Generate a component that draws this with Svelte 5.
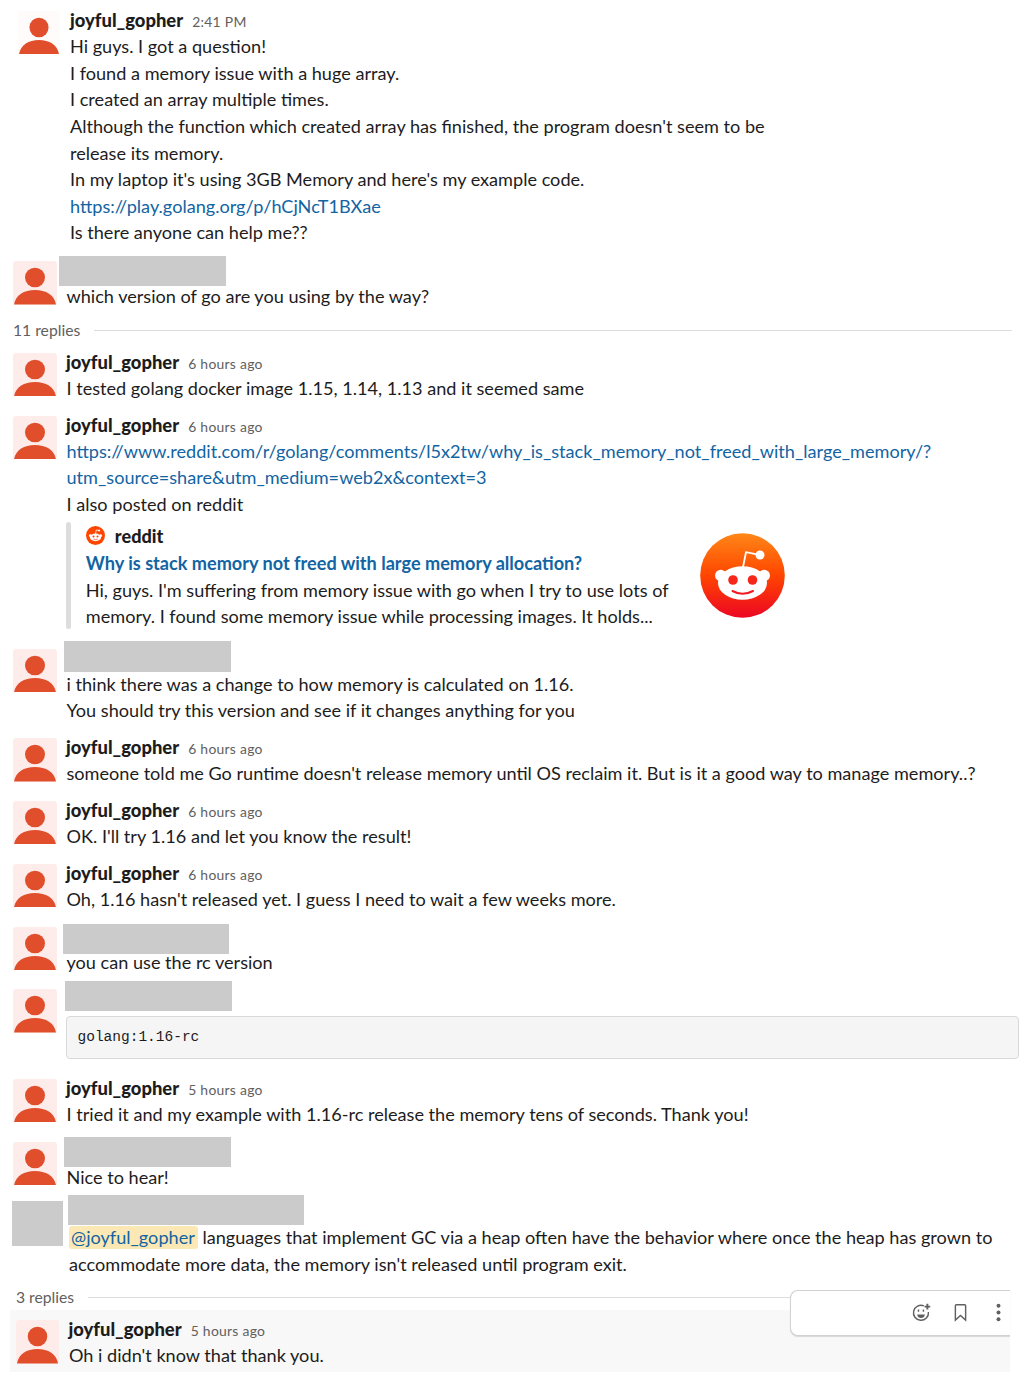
<script>
  const me = 'joyful_gopher';
  const first = [
    'Hi guys. I got a question!',
    'I found a memory issue with a huge array.',
    'I created an array multiple times.',
    "Although the function which created array has finished, the program doesn't seem to be",
    'release its memory.',
    "In my laptop it's using 3GB Memory and here's my example code.",
    { url: 'https://play.golang.org/p/hCjNcT1BXae' },
    'Is there anyone can help me??'
  ];
  const before = [
    { kind: 'first', name: me, time: '2:41 PM', lines: first },
    { kind: 'second', box: [-7.5, -1, 167, 30], lines: ['which version of go are you using by the way?'] }
  ];
  const thread = [
    { name: me, time: '6 hours ago', lines: ['I tested golang docker image 1.15, 1.14, 1.13 and it seemed same'] },
    {
      kind: 'shared',
      name: me,
      time: '6 hours ago',
      lines: [
        { url: 'https://www.reddit.com/r/golang/comments/l5x2tw/why_is_stack_memory_not_freed_with_large_memory/?' },
        { url: 'utm_source=share&utm_medium=web2x&context=3' },
        'I also posted on reddit'
      ],
      card: true
    },
    {
      kind: 'pair',
      box: [-2.5, -4, 167, 31],
      lines: ['i think there was a change to how memory is calculated on 1.16.', 'You should try this version and see if it changes anything for you']
    },
    { name: me, time: '6 hours ago', lines: ["someone told me Go runtime doesn't release memory until OS reclaim it. But is it a good way to manage memory..?"] },
    { name: me, time: '6 hours ago', lines: ["OK. I'll try 1.16 and let you know the result!"] },
    { name: me, time: '6 hours ago', lines: ["Oh, 1.16 hasn't released yet. I guess I need to wait a few weeks more."] },
    { box: [-3.5, 1, 166, 30], lines: ['you can use the rc version'] },
    { kind: 'coded', box: [-1.5, -4.3, 167, 30], lines: [], code: 'golang:1.16-rc' },
    { name: me, time: '5 hours ago', lines: ['I tried it and my example with 1.16-rc release the memory tens of seconds. Thank you!'] },
    { box: [-2.5, -1, 167, 30], lines: ['Nice to hear!'] },
    {
      kind: 'mention',
      box: [-1, -3, 236, 30],
      hidden: true,
      lines: [
        { mention: '@joyful_gopher', rest: ' languages that implement GC via a heap often have the behavior where once the heap has grown to' },
        "accommodate more data, the memory isn't released until program exit."
      ]
    }
  ];
  const last = { kind: 'hovered', name: me, time: '5 hours ago', lines: ["Oh i didn't know that thank you."] };
</script>

{#snippet avatar()}
  <svg class="avatar" viewBox="0 0 44 43.5" preserveAspectRatio="none">
    <rect class="tile" width="44" height="43.5" rx="3" />
    <ellipse cx="22" cy="16.5" rx="10" ry="9.8" />
    <path d="M1 43.5C2.500 34 11 29 22 29S41.500 34 43 43.500Z" />
  </svg>
{/snippet}

{#snippet message(m)}
  <article class="message {m.kind ?? ''}">
    {#if m.hidden}<div class="blank"></div>{:else}{@render avatar()}{/if}
    <div class="body">
      <header>
        {#if m.name}
          <b>{m.name}</b><time>{m.time}</time>
        {:else}
          <div class="redacted" style="margin-left:{m.box[0]}px;margin-top:{m.box[1]}px;width:{m.box[2]}px;height:{m.box[3]}px"></div>
        {/if}
      </header>
      {#each m.lines as l}
        {#if l.url}
          <p><a href="#shared">{l.url}</a></p>
        {:else if l.mention}
          <p><span class="tag">{l.mention}</span>{l.rest}</p>
        {:else}
          <p>{l}</p>
        {/if}
      {/each}
      {#if m.code}<pre>{m.code}</pre>{/if}
      {#if m.card}
        <div class="card">
          <div class="bar"></div>
          <div class="summary">
            <div class="source">
              <svg viewBox="0 0 20 20">
                <circle cx="10" cy="10" r="10" fill="#ff4500" />
                <g fill="#fff">
                  <ellipse cx="10" cy="12" rx="5.800" ry="4" />
                  <circle cx="4.600" cy="10.200" r="1.500" />
                  <circle cx="15.400" cy="10.200" r="1.500" />
                  <circle cx="13.800" cy="4.800" r="1.100" />
                </g>
                <path d="M10 8.500L10.800 4.200L13.500 4.800" fill="none" stroke="#fff" stroke-width=".8" />
                <g fill="#ff4500">
                  <circle cx="7.900" cy="11" r="1.100" />
                  <circle cx="12.100" cy="11" r="1.100" />
                </g>
                <path d="M7.800 13.700Q10 15 12.200 13.700" fill="none" stroke="#ff4500" stroke-width=".7" />
              </svg>
              <strong>reddit</strong>
            </div>
            <p class="title">Why is stack memory not freed with large memory allocation?</p>
            <p>Hi, guys. I'm suffering from memory issue with go when I try to use lots of</p>
            <p>memory. I found some memory issue while processing images. It holds...</p>
          </div>
          <svg class="logo" viewBox="0 0 85 85">
            <defs>
              <linearGradient id="flame" x1="0" y1="0" x2="0" y2="1">
                <stop offset="0" stop-color="#ff8717" />
                <stop offset=".5" stop-color="#ff4500" />
                <stop offset="1" stop-color="#ec0623" />
              </linearGradient>
            </defs>
            <circle cx="42.500" cy="42.500" r="42.300" fill="url(#flame)" />
            <g fill="#fff">
              <ellipse cx="42.500" cy="50" rx="24.500" ry="16.700" />
              <circle cx="20.800" cy="42.500" r="5.800" />
              <circle cx="64.200" cy="42.500" r="5.800" />
              <circle cx="60" cy="22" r="4.500" />
            </g>
            <path d="M43 34L46 19.200L58 21.700" fill="none" stroke="#fff" stroke-width="1.800" stroke-linejoin="round" />
            <g fill="#f5271a">
              <circle cx="33" cy="47" r="4.800" />
              <circle cx="52.500" cy="47" r="4.800" />
            </g>
            <path d="M32.500 58Q42.500 63.500 53 58" fill="none" stroke="#f01a20" stroke-width="2" stroke-linecap="round" />
          </svg>
        </div>
      {/if}
    </div>
  </article>
{/snippet}

<main>
  {#each before as m}{@render message(m)}{/each}
  <div class="divider"><span>11 replies</span><hr /></div>
  {#each thread as m}{@render message(m)}{/each}
  <div class="divider nested"><span>3 replies</span><hr /></div>
  <section>
    {@render message(last)}
    <div class="toolbar">
      <svg viewBox="0 0 20 20">
        <path d="M12.500 3A7.900 7.900 0 1 0 17.300 9.500" />
        <path d="M16.200 .8V6.800M13.200 3.800H19.200" class="plus" />
        <path d="M6.800 6.800V9.300M12 6.800V9.300" />
        <path d="M5.500 12H13.500C13.500 17 5.500 17 5.500 12Z" class="solid" />
      </svg>
      <svg viewBox="0 0 20 20">
        <path d="M4.600 2.800Q4.600 1.800 5.600 1.800H14.400Q15.400 1.800 15.400 2.800V18L10 13.200L4.600 18Z" />
      </svg>
      <svg viewBox="0 0 20 20">
        <g class="solid"><circle cx="10" cy="2.900" r="2.100" /><circle cx="10" cy="10" r="2.100" /><circle cx="10" cy="17.100" r="2.100" /></g>
      </svg>
    </div>
  </section>
</main>

<style>
  :global(body) { background: #fff; }
  main {
    box-sizing: border-box;
    height: 1389px;
    padding-top: 2.4px;
    overflow: hidden;
    font: 18.130px/26.590px Lato, sans-serif;
    color: #1d1c1d;
  }
  .message {
    box-sizing: border-box;
    display: flex;
    height: 62.860px;
    padding: 4.800px 5px 0 13px;
  }
  .avatar { flex: none; width: 44px; height: 43.500px; margin: 4px 9.500px 0 0; fill: #e04e2b; }
  .tile { fill: #fdecea; }
  .body { flex: 1; min-width: 0; }
  header { display: flow-root; height: 26px; white-space: nowrap; }
  header b { margin-left: -.5px; font-size: 18.400px; font-weight: 900; }
  time { margin-left: 9px; font-size: 13.900px; letter-spacing: .28px; color: #616061; }
  .redacted, .blank { background: #cbcbcb; }
  p { margin: 0; white-space: pre; }
  a { color: #1264a3; text-decoration: none; }
  .first { height: 250px; padding-left: 18px; }
  .first .avatar { width: 42px; margin-top: 3.500px; margin-right: 10.300px; margin-left: -.3px; }
  .first .tile { fill: #fefbfa; }
  .first header b { margin-left: 0; }
  .second { height: 63.200px; }
  .divider { display: flex; align-items: center; gap: 14px; height: 28.600px; padding: 0 12px 0 13px; font-size: 15.700px; color: #616061; }
  .divider hr { flex: 1; height: 1px; margin: 1px 0 0; border: 0; background: #ddd; }
  .shared { height: 232.800px; }
  .pair { height: 89.400px; }
  .coded { height: 89.400px; }
  .mention { height: 87.800px; padding: 2px 5px 0 12px; }
  .mention header { height: 26.400px; }
  .blank { flex: none; width: 51px; height: 45px; margin: 3px 6px 0 0; }
  .tag { padding: 0 3px 1px 2px; border-radius: 3px; background: #fbe8b4; color: #1264a3; }
  pre {
    box-sizing: border-box;
    height: 43px;
    margin: 4.700px 0 0 -.5px;
    padding: 10px 10.500px;
    border: 1px solid #d9d9d9;
    border-radius: 4px;
    background: #f5f5f5;
    font: 14.500px/21.500px "Liberation Mono", monospace;
  }
  .card { display: flex; height: 107px; margin: 4.200px 0 0 -.7px; }
  .bar { width: 5px; margin-right: 15px; border-radius: 3px; background: #ddd; }
  .summary { width: 614px; }
  .source { display: flex; align-items: center; height: 28.400px; gap: 10px; }
  .source svg { width: 19px; height: 19px; }
  strong, .title { font-weight: 700; }
  .source strong { font-weight: 900; }
  .title { color: #1264a3; }
  .logo { width: 85px; height: 85px; margin-top: 11.500px; }
  .nested { height: 26.600px; padding: 0 14px 0 16px; }
  .nested hr { margin-top: 2px; }
  section { position: relative; width: 1000px; margin-left: 10px; height: 62px; background: #f8f8f8; }
  .hovered { padding: 6px 0 0 6px; }
  .hovered .avatar { width: 43px; margin-right: 10px; }
  .toolbar {
    position: absolute;
    top: -20px;
    right: 0;
    box-sizing: border-box;
    display: flex;
    align-items: center;
    justify-content: flex-end;
    gap: 19.500px;
    width: 220px;
    height: 46px;
    padding: 0 2px 2px 0;
    border: 1px solid #d2d2d2;
    border-right: 0;
    border-radius: 8px 0 0 8px;
    background: #fff;
    box-shadow: 0 1px 1px #0002;
  }
  .toolbar svg { width: 19px; height: 19px; fill: none; stroke: #616061; stroke-width: 1.500; }
  .toolbar .plus { stroke-width: 2; }
  .toolbar .solid { fill: #616061; stroke: none; }
</style>
